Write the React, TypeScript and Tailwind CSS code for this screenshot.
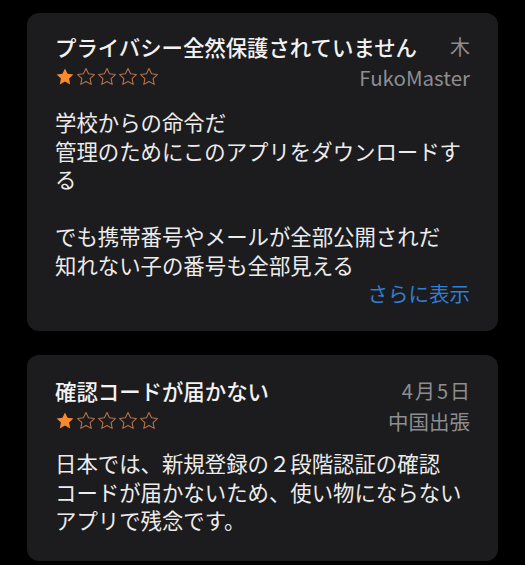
import React from 'react';

const STAR = 'M12 1.8l3.05 6.4 7 .85-5.15 4.85 1.35 6.95L12 17.4l-6.25 3.45 1.35-6.95L1.95 9.05l7-.85z';

function Stars({ value }: { value: number }) {
  return (
    <div className="flex items-center gap-[1px]">
      {[0, 1, 2, 3, 4].map((i) => (
        <svg key={i} viewBox="0 0 24 24" className="w-[20px] h-[20px]">
          {i < value ? (
            <path d={STAR} fill="#f7892f" />
          ) : (
            <path d={STAR} fill="none" stroke="#b5714c" strokeWidth="1.3" strokeLinejoin="round" />
          )}
        </svg>
      ))}
    </div>
  );
}

interface ReviewProps {
  title: string;
  date: string;
  author: string;
  rating: number;
  body: string;
  more?: boolean;
  dateWide?: boolean;
  bodyGap: string;
  padding: string;
}

function ReviewCard({ title, date, author, rating, body, more, dateWide, bodyGap, padding }: ReviewProps) {
  return (
    <div className={`bg-[#1c1c1e] rounded-[12px] px-[28px] ${padding}`}>
      {/* Header */}
      <div className="flex items-center justify-between h-[28px]">
        <span className="text-[21.4px] leading-[28px] font-medium text-[#f2f2f2] whitespace-nowrap">{title}</span>
        <span
          className={`text-[20px] leading-[28px] text-[#8d8d92] whitespace-nowrap ${
            dateWide ? 'tracking-[2px] -mr-[2px]' : ''
          }`}
        >
          {date}
        </span>
      </div>
      <div className="flex items-center justify-between h-[28px] mt-[2px]">
        <Stars value={rating} />
        <span className="text-[20.5px] leading-[28px] text-[#8d8d92] whitespace-nowrap">{author}</span>
      </div>

      {/* Body */}
      <p className={`${bodyGap} text-[21.4px] leading-[28.5px] text-[#ececec] whitespace-pre-line`}>{body}</p>
      {more && (
        <div className="flex justify-end">
          <span className="text-[20.5px] leading-[28px] text-[#2f7ed8]">さらに表示</span>
        </div>
      )}
    </div>
  );
}

export default function App() {
  return (
    <div
      className="min-h-screen bg-black px-[27px] pt-[13px] pb-[6px] flex flex-col gap-[24px]"
      style={{ fontFamily: '"Noto Sans CJK JP", "Noto Sans", sans-serif' }}
    >
      <ReviewCard
        title="プライバシー全然保護されていません"
        date="木"
        author="FukoMaster"
        rating={1}
        body={'学校からの命令だ\n管理のためにこのアプリをダウンロードす\nる\n\nでも携帯番号やメールが全部公開されだ\n知れない子の番号も全部見える'}
        more
        bodyGap="mt-[17px]"
        padding="pt-[20px] pb-[24px]"
      />
      <ReviewCard
        title="確認コードが届かない"
        date="4月5日"
        author="中国出張"
        rating={1}
        body={'日本では、新規登録の２段階認証の確認\nコードが届かないため、使い物にならない\nアプリで残念です。'}
        dateWide
        bodyGap="mt-[14px]"
        padding="pt-[22px] pb-[26px]"
      />
    </div>
  );
}
